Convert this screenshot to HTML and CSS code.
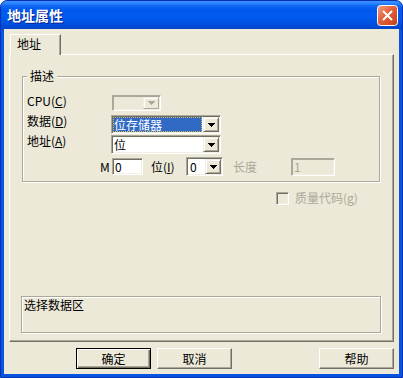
FILE: index.html
```html
<!DOCTYPE html>
<html lang="zh-CN">
<head>
    <meta charset="UTF-8">
    <title>地址属性</title>
    <link rel="stylesheet" href="styles.css">
</head>
<body>
<div class="window">
    <!-- Title bar -->
    <div class="titlebar">
        <span class="title">地址属性</span>
        <div class="close-btn">
            <svg width="21" height="21" viewBox="0 0 21 21">
                <defs>
                    <linearGradient id="closeGrad" x1="0" y1="0" x2="1" y2="1">
                        <stop offset="0" stop-color="#f4a184"/>
                        <stop offset="0.45" stop-color="#e2603a"/>
                        <stop offset="1" stop-color="#c23f1a"/>
                    </linearGradient>
                </defs>
                <rect x="0.5" y="0.5" width="20" height="20" rx="3" fill="url(#closeGrad)" stroke="#fff"/>
                <path d="M6 6l9 9M15 6l-9 9" stroke="#fff" stroke-width="2"/>
            </svg>
        </div>
    </div>

    <div class="client">
        <div class="tabs">
            <div class="tab">地址</div>
        </div>

        <div class="tab-page">
            <!-- 描述 group -->
            <div class="group">
                <div class="group-title">描述</div>
                <div class="rows">
                    <div class="row row-cpu">
                        <span class="label">CPU(<u>C</u>)</span>
                        <div class="combo combo-cpu disabled">
                            <span class="combo-text"></span>
                            <span class="drop-btn"><svg width="7" height="4"><path d="M0 0h7v1h-1v1h-1v1h-1v1h-1v-1h-1v-1h-1v-1h-1z"/></svg></span>
                        </div>
                    </div>
                    <div class="row row-data">
                        <span class="label">数据(<u>D</u>)</span>
                        <div class="combo combo-wide">
                            <span class="combo-text selected">位存储器</span>
                            <span class="drop-btn"><svg width="7" height="4"><path d="M0 0h7v1h-1v1h-1v1h-1v1h-1v-1h-1v-1h-1v-1h-1z"/></svg></span>
                        </div>
                    </div>
                    <div class="row row-area">
                        <span class="label">地址(<u>A</u>)</span>
                        <div class="combo combo-wide">
                            <span class="combo-text">位</span>
                            <span class="drop-btn"><svg width="7" height="4"><path d="M0 0h7v1h-1v1h-1v1h-1v1h-1v-1h-1v-1h-1v-1h-1z"/></svg></span>
                        </div>
                    </div>
                    <div class="row row-addr">
                        <span class="m-label">M</span>
                        <div class="edit edit-m">0</div>
                        <span class="bit-label">位(<u>I</u>)</span>
                        <div class="combo combo-bit">
                            <span class="combo-text">0</span>
                            <span class="drop-btn"><svg width="7" height="4"><path d="M0 0h7v1h-1v1h-1v1h-1v1h-1v-1h-1v-1h-1v-1h-1z"/></svg></span>
                        </div>
                        <span class="len-label">长度</span>
                        <div class="edit edit-len disabled">1</div>
                    </div>
                </div>
            </div>

            <div class="check-row">
                <span class="checkbox"></span>
                <span class="check-label">质量代码(<u>g</u>)</span>
            </div>

            <div class="status">选择数据区</div>
        </div>

        <div class="buttons">
            <button class="btn default">确定</button>
            <button class="btn">取消</button>
            <button class="btn btn-help">帮助</button>
        </div>
    </div>
</div>
</body>
</html>
```

FILE: styles.css
```css
body {
    margin: 0;
    background: #fff;
    font-family: "Noto Sans CJK SC", "DejaVu Sans", sans-serif;
    font-size: 12px;
    line-height: 14px;
    color: #000;
}

.window {
    width: 403px;
    height: 378px;
    box-sizing: border-box;
    display: flex;
    flex-direction: column;
    background: #0854e2;
    border: 1px solid #0a2fb4;
    border-radius: 7px 7px 0 0;
    overflow: hidden;
}

/* title bar */
.titlebar {
    height: 28px;
    flex-shrink: 0;
    display: flex;
    align-items: center;
    justify-content: space-between;
    padding: 0 4px 0 6px;
    background: linear-gradient(180deg, #3d95ff 0, #2e87ff 2px, #0f66f2 5px, #0058ee 9px, #005bf0 15px, #0055e6 21px, #004bd8 25px, #0043c8 28px);
}

.title {
    color: #fff;
    font-size: 14px;
    font-weight: bold;
    line-height: 16px;
    text-shadow: 1px 1px #0a1f8c;
}

.close-btn {
    width: 21px;
    height: 21px;
    display: flex;
}

/* client area */
.client {
    flex: 1;
    margin: 0 3px 3px;
    padding: 5px;
    background: #ece9d8;
    display: flex;
    flex-direction: column;
}

.tabs {
    height: 20px;
    display: flex;
    align-items: flex-start;
    padding-left: 1px;
    position: relative;
    z-index: 1;
}

.tab {
    width: 51px;
    height: 21px;
    box-sizing: border-box;
    padding: 2px 0 0 6px;
    background: #ece9d8;
    border-top: 1px solid #fff;
    border-left: 1px solid #fff;
    border-right: 1px solid #716f64;
    box-shadow: inset -1px 0 #aca899;
}

.tab-page {
    height: 288px;
    box-sizing: border-box;
    border: 1px solid;
    border-color: #fff #716f64 #716f64 #fff;
    box-shadow: inset -1px -1px #aca899;
    padding: 21px 13px 0 12px;
}

/* group box */
.group {
    border: 1px solid #aca899;
    box-shadow: inset 1px 1px #fff, 1px 1px #fff;
    padding: 0 0 5px 4px;
}

.group-title {
    width: fit-content;
    margin-top: -8px;
    padding: 0 3px;
    background: #ece9d8;
}

.rows {
    margin-top: 12px;
}

.row {
    display: flex;
    align-items: flex-start;
}

.label {
    width: 84px;
    flex-shrink: 0;
    margin-top: -1px;
}

.row-data {
    margin-top: 4px;
}

.row-area {
    margin-top: 1px;
}

.row-addr {
    margin-top: 3px;
    padding-left: 73px;
    align-items: center;
}

/* combo boxes and edits */
.combo,
.edit {
    box-sizing: border-box;
    background: #fff;
    border: 1px solid;
    border-color: #aca899 #fff #fff #aca899;
    box-shadow: inset 1px 1px #716f64, inset -1px -1px #f1efe2;
    padding: 1px;
}

.combo {
    display: flex;
}

.combo-text {
    flex: 1;
    padding-left: 1px;
    line-height: 15px;
    white-space: nowrap;
    overflow: hidden;
}

.combo-text.selected {
    margin-right: 1px;
    background: #316ac5;
    color: #fff;
    outline: 1px dotted #d7b35a;
    outline-offset: -1px;
}

.drop-btn {
    width: 16px;
    flex-shrink: 0;
    box-sizing: border-box;
    display: flex;
    align-items: center;
    justify-content: center;
    background: #ece9d8;
    border: 1px solid;
    border-color: #f1efe2 #716f64 #716f64 #f1efe2;
    box-shadow: inset 1px 1px #fff, inset -1px -1px #aca899;
}

.drop-btn svg {
    fill: #000;
}

.combo-cpu {
    width: 49px;
    height: 16px;
    margin-left: 1px;
    background: #ece9d8;
    box-shadow: inset 1px 1px #aca899, inset -1px -1px #f1efe2;
}

.combo-cpu .drop-btn {
    width: 16px;
    border-color: #f1efe2 #aca899 #aca899 #f1efe2;
    box-shadow: inset 1px 1px #fff;
}

.combo-cpu .drop-btn svg {
    fill: #aca899;
}

.combo-wide {
    width: 110px;
    height: 19px;
}

.m-label {
    width: 12px;
}

.edit {
    height: 17px;
    line-height: 13px;
    padding-left: 2px;
}

.edit-m {
    width: 31px;
}

.bit-label {
    width: 35px;
    margin-left: 8px;
}

.combo-bit {
    width: 37px;
    height: 19px;
}

.combo-bit .combo-text {
    padding-left: 2px;
}

.len-label {
    width: 58px;
    margin-left: 10px;
    color: #aca899;
}

.edit-len {
    width: 44px;
    height: 18px;
    background: #ece9d8;
    color: #aca899;
    box-shadow: inset 1px 1px #aca899, inset -1px -1px #f1efe2;
}

/* checkbox */
.check-row {
    display: flex;
    align-items: center;
    margin: 9px 0 0 254px;
}

.checkbox {
    width: 13px;
    height: 13px;
    box-sizing: border-box;
    border: 1px solid;
    border-color: #aca899 #fff #fff #aca899;
    box-shadow: inset 1px 1px #716f64, inset -1px -1px #f1efe2;
    background: #ece9d8;
}

.check-label {
    margin-left: 6px;
    color: #aca899;
}

/* status text */
.status {
    height: 37px;
    box-sizing: border-box;
    margin: 91px -1px 0;
    padding: 1px 2px;
    border: 1px solid #aca899;
    box-shadow: inset 1px 1px #fff, 1px 1px #fff;
}

/* bottom buttons */
.buttons {
    display: flex;
    gap: 6px;
    margin-top: 6px;
    padding-left: 67px;
}

.btn {
    width: 75px;
    height: 21px;
    padding: 0;
    box-sizing: border-box;
    font-family: "Noto Sans CJK SC", sans-serif;
    font-size: 12px;
    line-height: 17px;
    color: #000;
    background: #ece9d8;
    border: 1px solid;
    border-color: #fff #716f64 #716f64 #fff;
    box-shadow: inset -1px -1px #aca899;
}

.btn.default {
    border-color: #000;
    box-shadow: inset 1px 1px #fff, inset -1px -1px #716f64, inset -2px -2px #aca899;
}

.btn-help {
    margin-left: auto;
}
```
